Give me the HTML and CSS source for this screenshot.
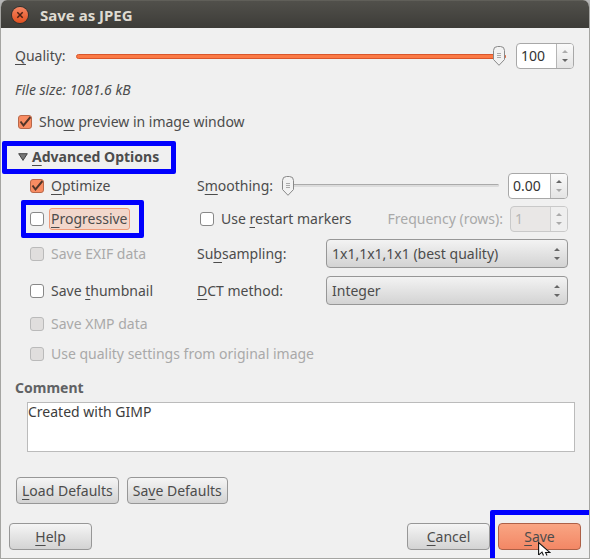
FILE: index.html
```html
<!DOCTYPE html>
<html lang="en">
<head>
<meta charset="UTF-8">
<meta name="viewport" content="width=device-width, initial-scale=1.0">
<title>Save as JPEG</title>
<link rel="stylesheet" href="styles.css">
</head>
<body>
<form class="dialog">
    <header class="titlebar">
        <button type="button" class="close-btn" aria-label="Close">
            <svg viewBox="0 0 16 16" width="16" height="16">
                <path d="M5.3 5.3l5.4 5.4M10.7 5.3l-5.4 5.4" stroke="#4a2013" stroke-width="1.5" fill="none"/>
            </svg>
        </button>
        <h1>Save as JPEG</h1>
    </header>

    <main class="content">
        <div class="quality-row">
            <label for="quality"><u>Q</u>uality:</label>
            <input type="range" id="quality" class="slider filled" min="0" max="100" value="100">
            <div class="spin">
                <input type="text" value="100" aria-label="Quality value">
                <div class="spin-buttons">
                    <button type="button" class="up off" aria-label="Increase"></button>
                    <button type="button" class="down" aria-label="Decrease"></button>
                </div>
            </div>
        </div>
        <p class="file-size">File size: 1081.6 kB</p>
        <label class="check preview"><input type="checkbox" checked><span>Sho<u>w</u> preview in image window</span></label>

        <button type="button" class="expander marked" aria-expanded="true">
            <svg viewBox="0 0 10 8" width="10" height="8">
                <path d="M.7.7h8.6L5 7.4z" fill="#777" stroke="#444" stroke-width="1"/>
            </svg>
            <span><u>A</u>dvanced Options</span>
        </button>

        <div class="options">
            <label class="check"><input type="checkbox" checked><span><u>O</u>ptimize</span></label>
            <div class="field">
                <label for="smoothing">S<u>m</u>oothing:</label>
                <input type="range" id="smoothing" class="slider" min="0" max="1" step="0.01" value="0">
                <div class="spin wide">
                    <input type="text" value="0.00" aria-label="Smoothing value">
                    <div class="spin-buttons">
                        <button type="button" class="up" aria-label="Increase"></button>
                        <button type="button" class="down off" aria-label="Decrease"></button>
                    </div>
                </div>
            </div>

            <label class="check marked"><input type="checkbox"><span class="focused"><u>P</u>rogressive</span></label>
            <div class="field restart">
                <label class="check"><input type="checkbox"><span>Use <u>r</u>estart markers</span></label>
                <label for="frequency" class="frequency">Frequency (rows):</label>
                <div class="spin disabled">
                    <input type="text" id="frequency" value="1" disabled>
                    <div class="spin-buttons">
                        <button type="button" class="up off" aria-label="Increase" disabled></button>
                        <button type="button" class="down off" aria-label="Decrease" disabled></button>
                    </div>
                </div>
            </div>

            <label class="check disabled"><input type="checkbox" disabled><span>Save EXIF data</span></label>
            <div class="field combo">
                <label for="subsampling">Su<u>b</u>sampling:</label>
                <select id="subsampling">
                    <option>1x1,1x1,1x1 (best quality)</option>
                </select>
            </div>

            <label class="check"><input type="checkbox"><span>Save <u>t</u>humbnail</span></label>
            <div class="field combo">
                <label for="dct"><u>D</u>CT method:</label>
                <select id="dct">
                    <option>Integer</option>
                </select>
            </div>

            <label class="check disabled full"><input type="checkbox" disabled><span>Save XMP data</span></label>
            <label class="check disabled full"><input type="checkbox" disabled><span>Use quality settings from original image</span></label>
        </div>

        <label for="comment" class="comment-title">Comment</label>
        <textarea id="comment">Created with GIMP</textarea>

        <div class="defaults">
            <button type="button" class="btn"><u>L</u>oad Defaults</button>
            <button type="button" class="btn">Sa<u>v</u>e Defaults</button>
        </div>
    </main>

    <footer class="actions">
        <button type="button" class="btn"><u>H</u>elp</button>
        <button type="button" class="btn cancel"><u>C</u>ancel</button>
        <button type="submit" class="btn primary marked"><u>S</u>ave
            <svg class="pointer" viewBox="0 0 13 14" width="13" height="14">
                <path d="M.6.6V13h2l1.8-2.2L6 13.4h2.5L7 9.8h5z" fill="#fff"/>
                <path d="M.6 13V.6L12 10.5H7.6L9 13.4M.8 12.8l3.2-2.7 1.5 3.3" fill="none" stroke="#111" stroke-width="1.1"/>
            </svg>
        </button>
    </footer>
</form>
</body>
</html>
```
FILE: styles.css
```css
* {
    box-sizing: border-box;
}
body {
    margin: 0;
    background-color: #b5b5b5;
    color: #4c4c4c;
    font: 14px/20px "Noto Sans", sans-serif;
}
button, input, select, textarea {
    margin: 0;
    font: inherit;
    color: inherit;
}
u {
    text-decoration-thickness: 1px;
    text-underline-offset: 3px;
    text-decoration-skip-ink: none;
}
.dialog {
    display: flex;
    flex-direction: column;
    min-height: 100vh;
    overflow: hidden;
    background-color: #f0f0f0;
    border: 1px solid #a5a5a2;
    border-top: none;
    border-radius: 7px 7px 0 0;
}

/* Title bar */
.titlebar {
    display: flex;
    align-items: center;
    gap: 12px;
    height: 28px;
    margin: 0 -1px;
    padding: 0 12px;
    background: linear-gradient(#51504b, #3d3c38);
    border-top: 1px solid #605f59;
}
.titlebar h1 {
    margin: 0;
    font-size: 15px;
    color: #dfdbd2;
}
.close-btn {
    display: flex;
    width: 16px;
    height: 16px;
    padding: 0;
    border: none;
    border-radius: 50%;
    background: linear-gradient(#f58562, #e2501f);
    box-shadow: 0 0 0 1px #33302c;
}

/* Sliders */
.slider {
    flex: 1;
    min-width: 0;
    height: 20px;
    appearance: none;
    background: none;
}
.slider::-webkit-slider-runnable-track {
    height: 3px;
    background: #dcdcdc;
    border-top: 1px solid #aaa;
    border-radius: 2px;
}
.slider::-webkit-slider-thumb {
    appearance: none;
    width: 12px;
    height: 20px;
    margin-top: -9px;
    background: url("data:image/svg+xml,%3Csvg xmlns='http://www.w3.org/2000/svg' viewBox='0 0 12 20'%3E%3Cpath d='M.5 4.5Q.5.5 4.5.5h3Q11.5.5 11.5 4.5v9L6 19.3.5 13.5z' fill='%23f2f2f2' stroke='%23888'/%3E%3Cpath d='M4 7.5h4M4 9.5h4M4 11.5h4' stroke='%23aaa'/%3E%3C/svg%3E");
}
.slider.filled::-webkit-slider-runnable-track {
    height: 5px;
    background: #fb7a45;
    border: 1px solid #d9562b;
    border-radius: 3px;
}
.slider.filled::-webkit-slider-thumb {
    margin-top: -9px;
}

/* Spin boxes */
.spin {
    display: flex;
    width: 58px;
    height: 26px;
    border: 1px solid #a8a8a8;
    border-radius: 4px;
    overflow: hidden;
    background-color: #fff;
}
.spin.wide {
    width: 60px;
}
.spin input {
    flex: 1;
    min-width: 0;
    padding: 0 0 0 4px;
    border: none;
    background: none;
    color: #333;
}
.spin-buttons {
    display: flex;
    flex-direction: column;
    width: 17px;
    padding: 3px 0;
    border-left: 1px solid #b5b5b5;
    background: linear-gradient(#fafafa, #e4e4e4);
}
.spin-buttons button {
    display: flex;
    flex: 1;
    align-items: center;
    justify-content: center;
    padding: 0;
    border: none;
    background: none;
}
.spin-buttons button::before {
    content: "";
    border: 3px solid transparent;
}
.spin-buttons .up::before {
    border-top: none;
    border-bottom-color: #666;
}
.spin-buttons .down::before {
    border-bottom: none;
    border-top-color: #666;
}
.spin-buttons .off {
    opacity: 0.5;
}
.spin.disabled {
    border-color: #c9c9c9;
    background-color: #e9e7e6;
}
.spin.disabled input {
    color: #b5b5b5;
}
.spin.disabled .spin-buttons {
    border-color: #d0d0d0;
    background: #efefef;
}

/* Check boxes */
.check {
    display: flex;
    align-items: center;
    gap: 7px;
}
.check input {
    appearance: none;
    width: 14px;
    height: 14px;
    background-color: #fff;
    border: 1px solid #888;
    border-radius: 3px;
}
.check input:checked {
    border-color: #b8684a;
    background: #f98c62 url("data:image/svg+xml,%3Csvg xmlns='http://www.w3.org/2000/svg' viewBox='0 0 12 12'%3E%3Cpath d='M1.5 5.5l3 4L11.5 1' fill='none' stroke='%23523528' stroke-width='2'/%3E%3C/svg%3E");
}
.check input:disabled {
    border-color: #bababa;
    background-color: #e0dedd;
}
.check.disabled, .frequency {
    color: #a9a9a9;
}
.focused {
    margin-left: -2px;
    padding: 0 1px;
    background-color: #f2d7cb;
    border: 1px solid #ef9a7a;
    border-radius: 3px;
}

/* Blue highlight frames */
.marked {
    position: relative;
}
.marked::after {
    content: "";
    position: absolute;
    inset: -8px -14px -8px -9px;
    border: 5px solid #0000fe;
    border-radius: 2px;
    pointer-events: none;
}

.content {
    flex: 1;
    display: flex;
    flex-direction: column;
    align-items: flex-start;
    padding: 15px 14px 0;
}
.quality-row {
    display: flex;
    align-items: center;
    align-self: stretch;
    gap: 10px;
    padding-right: 1px;
}
.quality-row label {
    width: 51px;
}
.file-size {
    margin: 11px 0 12px;
    font-style: italic;
}
.preview {
    padding-left: 3px;
}
.expander {
    display: flex;
    align-items: center;
    gap: 4px;
    margin: 15px 0 2px;
    padding: 0 0 0 3px;
    border: none;
    background: none;
    font-weight: bold;
}
.expander::after {
    inset: -6px -17px -7px -13px;
}

/* Advanced options */
.options {
    display: grid;
    grid-template-columns: 152px 1fr;
    grid-template-rows: 33px 33px 37px 37px 30px 30px;
    column-gap: 15px;
    align-items: center;
    align-self: stretch;
    padding: 0 7px 0 15px;
}
.options > .check {
    justify-self: start;
}
.full {
    grid-column: 1 / -1;
}
.field {
    display: flex;
    align-items: center;
}
.field .slider {
    margin: 0 9px;
}
.restart {
    justify-content: space-between;
    padding-left: 3px;
}
.frequency {
    margin-left: auto;
    margin-right: 7px;
}
.combo label {
    width: 129px;
}
.combo select {
    flex: 1;
    min-width: 0;
    height: 29px;
    padding: 0 20px 0 5px;
    appearance: none;
    border: 1px solid #979797;
    border-radius: 4px;
    background: url("data:image/svg+xml,%3Csvg xmlns='http://www.w3.org/2000/svg' viewBox='0 0 6 12'%3E%3Cpath d='M0 3l3-3 3 3zM0 9h6l-3 3z' fill='%23666'/%3E%3C/svg%3E") no-repeat right 7px center / 6px 12px, linear-gradient(#f3f3f3, #d3d3d3);
}

.comment-title {
    margin: 9px 0 4px;
    font-weight: bold;
    color: #606264;
}
textarea {
    align-self: stretch;
    height: 50px;
    margin-left: 12px;
    padding: 0;
    border: 1px solid #bbb;
    background-color: #fff;
    color: #3c3c3c;
    line-height: 18px;
    resize: none;
}

/* Buttons */
.defaults {
    display: flex;
    gap: 8px;
    margin: 25px 0 0 1px;
}
.btn {
    height: 27px;
    min-width: 83px;
    padding: 0 5px;
    border: 1px solid #979797;
    border-radius: 4px;
    background: linear-gradient(#f5f5f5, #d3d3d3);
}
.actions {
    display: flex;
    gap: 8px;
    padding: 0 8px;
    margin-bottom: 8px;
}
.cancel {
    margin-left: auto;
}
.primary {
    border-color: #ad6047;
    background: linear-gradient(#f9a583, #f38765);
}
.primary::after {
    inset: -14px -20px -20px -9px;
}
.pointer {
    position: absolute;
    left: 39px;
    top: 18px;
}
```
